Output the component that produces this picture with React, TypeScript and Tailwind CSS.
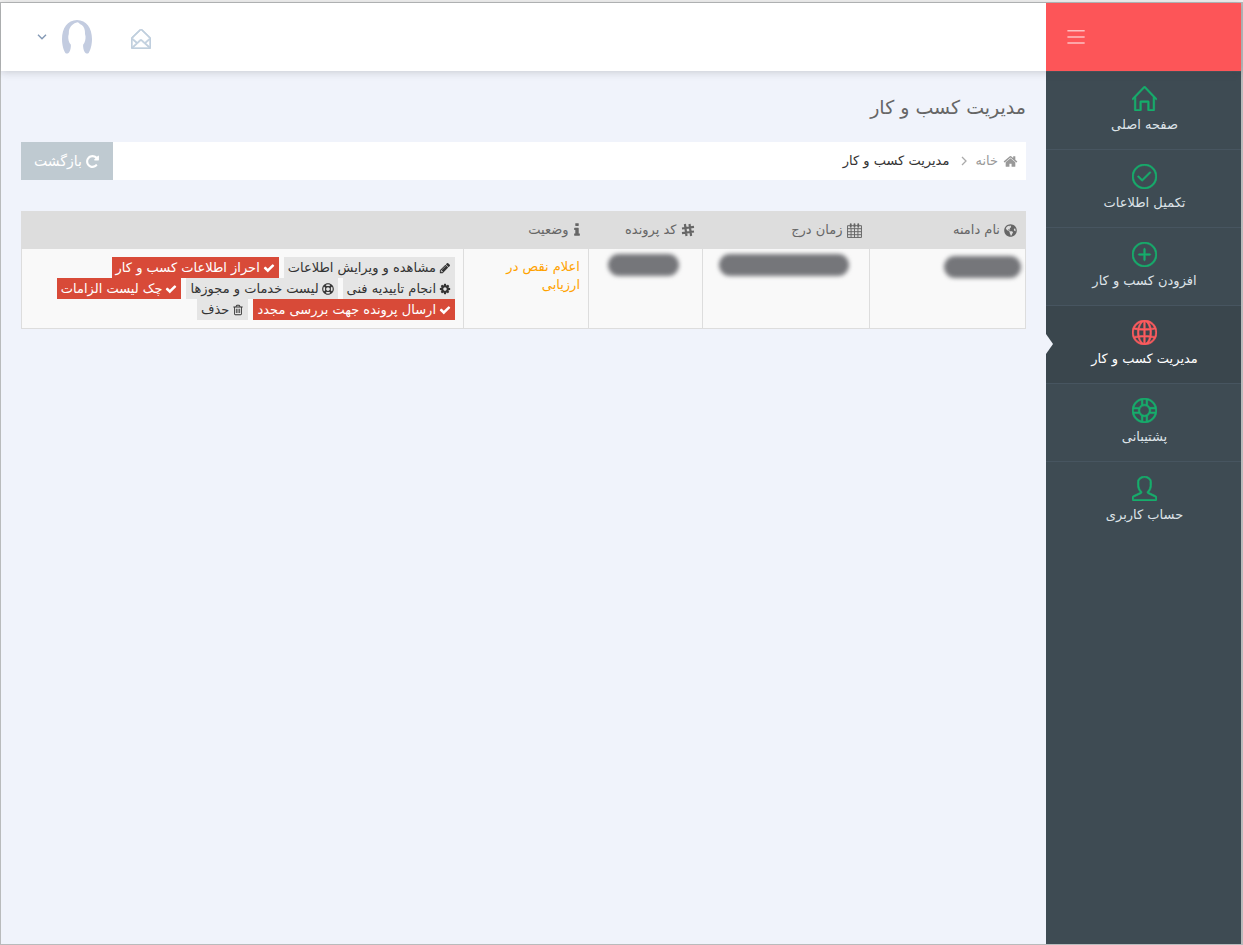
import React from "react";
import {
  SlCheck,
  SlEnvelopeOpen,
  SlGlobe,
  SlHome,
  SlMenu,
  SlPlus,
  SlSupport,
  SlUser,
} from "react-icons/sl";
import { FaGlobeAmericas, FaRegLifeRing } from "react-icons/fa";
import type { IconType } from "react-icons";
import clsx from "clsx";

const GLYPHS = {
  check:
    "M1671 566q0 40-28 68l-724 724-136 136q-28 28-68 28t-68-28l-136-136-362-362q-28-28-28-68t28-68l136-136q28-28 68-28t68 28l294 295 656-657q28-28 68-28t68 28l136 136q28 28 28 68z",
  home: "M1472 992v480q0 26-19 45t-45 19h-384v-384h-256v384h-384q-26 0-45-19t-19-45v-480q0-1 .5-3t.5-3l575-474 575 474q1 2 1 6zm223-69l-62 74q-8 9-21 11h-3q-13 0-21-7l-692-577-692 577q-12 8-24 7-13-2-21-11l-62-74q-8-10-7-23.5t11-21.5l719-599q32-26 76-26t76 26l244 204v-195q0-14 9-23t23-9h192q14 0 23 9t9 23v408l219 182q10 8 11 21.5t-7 23.5z",
  pencil:
    "M491 1536l91-91-235-235-91 91v107h128v128h107zm523-928q0-22-22-22-10 0-17 7l-542 542q-7 7-7 17 0 22 22 22 10 0 17-7l542-542q7-7 7-17zm-54-192l416 416-832 832h-416v-416zm683 96q0 53-37 90l-166 166-416-416 166-165q36-38 90-38 53 0 91 38l235 234q37 39 37 91z",
  cog: "M1152 896q0-106-75-181t-181-75-181 75-75 181 75 181 181 75 181-75 75-181zm512-109v222q0 12-8 23t-20 13l-185 28q-19 54-39 91 35 50 107 138 10 12 10 25t-9 23q-27 37-99 108t-94 71q-12 0-26-9l-138-108q-44 23-91 38-16 136-29 186-7 28-36 28h-222q-14 0-24.5-8.5t-11.5-21.5l-28-184q-49-16-90-37l-141 107q-10 9-25 9-14 0-25-11-126-114-165-168-7-10-7-23 0-12 8-23 15-21 51-66.5t54-70.5q-27-50-41-99l-183-27q-13-2-21-12.5t-8-23.5v-222q0-12 8-23t19-13l186-28q14-46 39-92-40-57-107-138-10-12-10-24 0-10 9-23 26-36 98.5-107.5t94.5-71.5q13 0 26 10l138 107q44-23 91-38 16-136 29-186 7-28 36-28h222q14 0 24.5 8.5t11.5 21.5l28 184q49 16 90 37l142-107q9-9 24-9 13 0 25 10 129 119 165 170 7 8 7 22 0 12-8 23-15 21-51 66.5t-54 70.5q26 50 41 98l183 28q13 2 21 12.5t8 23.5z",
  info: "M1216 1344v128q0 26-19 45t-45 19h-512q-26 0-45-19t-19-45v-128q0-26 19-45t45-19h64v-384h-64q-26 0-45-19t-19-45v-128q0-26 19-45t45-19h384q26 0 45 19t19 45v576h64q26 0 45 19t19 45zm-128-1152v192q0 26-19 45t-45 19h-256q-26 0-45-19t-19-45v-192q0-26 19-45t45-19h256q26 0 45 19t19 45z",
  repeat:
    "M1664 256v448q0 26-19 45t-45 19h-448q-42 0-59-40-17-39 14-69l138-138q-148-137-349-137-104 0-198.5 40.5t-163.5 109.5-109.5 163.5-40.5 198.5 40.5 198.5 109.5 163.5 163.5 109.5 198.5 40.5q119 0 225-52t179-147q7-10 23-12 15 0 25 9l137 138q9 8 9.5 20.5t-7.5 22.5q-109 132-264 204.5t-327 72.5q-156 0-298-61t-245-164-164-245-61-298 61-298 164-245 245-164 298-61q147 0 284.5 55.5t244.5 156.5l130-129q29-31 70-14 39 17 39 59z",
  trash:
    "M704 736v576q0 14-9 23t-23 9h-64q-14 0-23-9t-9-23v-576q0-14 9-23t23-9h64q14 0 23 9t9 23zm256 0v576q0 14-9 23t-23 9h-64q-14 0-23-9t-9-23v-576q0-14 9-23t23-9h64q14 0 23 9t9 23zm256 0v576q0 14-9 23t-23 9h-64q-14 0-23-9t-9-23v-576q0-14 9-23t23-9h64q14 0 23 9t9 23zm128 724v-948h-896v948q0 22 7 40.5t14.5 27 10.5 8.5h832q3 0 10.5-8.5t14.5-27 7-40.5zm-672-1076h448l-48-117q-7-9-17-11h-317q-10 2-17 11zm928 32v64q0 14-9 23t-23 9h-96v948q0 83-47 143.5t-113 60.5h-832q-66 0-113-58.5t-47-141.5v-952h-96q-14 0-23-9t-9-23v-64q0-14 9-23t23-9h309l70-167q15-37 54-63t79-26h320q40 0 79 26t54 63l70 167h309q14 0 23 9t9 23z",
};

type GlyphName = keyof typeof GLYPHS;

const Glyph: React.FC<{ name: GlyphName; className?: string }> = ({ name, className }) => (
  <svg viewBox="0 0 1792 1792" fill="currentColor" aria-hidden="true" className={clsx("shrink-0", className)}>
    <path d={GLYPHS[name]} />
  </svg>
);

const CalendarIcon = () => (
  <svg viewBox="0 0 14 14" fill="none" stroke="currentColor" aria-hidden="true" className="size-[15px] shrink-0">
    <path d="M.5 2.500h13v11H.5zM.5 5.300h13M.5 8.100h13M.5 10.900h13M3.800 5v8.500M7 5v8.500M10.200 5v8.500" strokeWidth="0.900" />
    <path d="M3.500 1v2.600M7 1v2.600M10.500 1v2.600" strokeWidth="1.700" strokeLinecap="round" />
  </svg>
);

const HashIcon = () => (
  <svg viewBox="0 0 14 14" fill="none" stroke="currentColor" strokeWidth="2.200" aria-hidden="true" className="size-[14px] shrink-0">
    <path d="M3.900 1l1.600 12M8.500 1l1.600 12M1 5.500l12-1.600M1 10.100l12-1.600" />
  </svg>
);

const AvatarIcon = () => (
  <svg viewBox="0 0 30 34" fill="#c3cce0" aria-hidden="true" className="h-[34px] w-[30px]">
    <path d="M15 0C5.500 0 0 8.500 0 19c0 6 1.500 11 3.200 13.700.8 1.300 3 1.200 4-.4 1.400-2.300 1.800-5.300 1.700-7.500C6.800 22.500 6 19 6.300 16c.5-1.200.6-3.200.6-5C7.500 6.500 11.500 3 15.500 2.200c1 .3 2 .9 2.400 1.900 2.800.9 4.500 3.700 5 6.900.1 2 .1 3.800.6 5 .3 3-.5 6.500-2.400 8.800-.1 2.200.3 5.200 1.700 7.500 1 1.600 3.200 1.700 4 .4C28.500 30 30 25 30 19 30 8.500 24.500 0 15 0z" />
  </svg>
);

const MENU: { label: string; icon: IconType; active?: boolean }[] = [
  { label: "صفحه اصلی", icon: SlHome },
  { label: "تکمیل اطلاعات", icon: SlCheck },
  { label: "افزودن کسب و کار", icon: SlPlus },
  { label: "مدیریت کسب و کار", icon: SlGlobe, active: true },
  { label: "پشتیبانی", icon: SlSupport },
  { label: "حساب کاربری", icon: SlUser },
];

const ACTIONS: { label: string; icon: React.ReactNode; danger?: boolean }[] = [
  { label: "مشاهده و ویرایش اطلاعات", icon: <Glyph name="pencil" className="size-3" /> },
  { label: "احراز اطلاعات کسب و کار", icon: <Glyph name="check" className="size-3" />, danger: true },
  { label: "انجام تاییدیه فنی", icon: <Glyph name="cog" className="size-3" /> },
  { label: "لیست خدمات و مجوزها", icon: <FaRegLifeRing className="size-3 shrink-0" /> },
  { label: "چک لیست الزامات", icon: <Glyph name="check" className="size-3" />, danger: true },
  { label: "ارسال پرونده جهت بررسی مجدد", icon: <Glyph name="check" className="size-3" />, danger: true },
  { label: "حذف", icon: <Glyph name="trash" className="size-3" /> },
];

const COLUMNS: { label: string; icon: React.ReactNode; width: string }[] = [
  { label: "نام دامنه", icon: <FaGlobeAmericas className="size-[13px] shrink-0" />, width: "w-[156px]" },
  { label: "زمان درج", icon: <CalendarIcon />, width: "w-[167px]" },
  { label: "کد پرونده", icon: <HashIcon />, width: "w-[114px]" },
  { label: "وضعیت", icon: <Glyph name="info" className="-mx-1 size-4" />, width: "w-[125px]" },
];

// Hidden value, drawn as a smudged bar
const Redacted: React.FC<{ className?: string }> = ({ className }) => (
  <div className={clsx("h-[22px] rounded-full bg-[#75767a] blur-[2px]", className)} />
);

const Sidebar = () => (
  <aside className="w-[195px] shrink-0 bg-[#3e4b53]">
    <nav>
      <ul>
        {MENU.map(({ label, icon: Icon, active }) => (
          <li key={label} className={clsx("relative border-t border-[#475560]", active && "bg-[#3a464d]")}>
            <a
              href="#"
              className={clsx(
                "flex h-[77px] flex-col items-center gap-1 pt-[14px] pl-0.5 text-[13px] leading-5",
                active ? "text-white" : "text-[#dde3e8]",
              )}
            >
              <Icon
                stroke="currentColor"
                strokeWidth={24}
                className={clsx("size-[25px]", active ? "text-[#fc5b5e]" : "text-[#16ae6c]")}
              />
              {label}
            </a>
            {active && (
              <span className="absolute top-7 left-0 border-y-10 border-l-7 border-y-transparent border-l-[#f0f3fb]" />
            )}
          </li>
        ))}
      </ul>
    </nav>
  </aside>
);

const App: React.FC = () => {
  return (
    <div
      dir="rtl"
      className="flex min-h-screen flex-col border-t-2 border-[#f1f1f1] bg-[#f0f3fb] font-['DejaVu_Sans',sans-serif] text-[13px] text-[#666]"
    >
      <div className="flex flex-1 flex-col border border-[#b9bbbc] border-r-2">
        {/* Header */}
        <header className="relative z-10 flex h-[68px] shrink-0 bg-white shadow-[0_1px_8px_rgba(50,50,50,0.22)]">
          <div className="flex w-[195px] shrink-0 items-center justify-end bg-[#fd5558] px-[21px]">
            <button type="button" aria-label="منو" className="text-[#fdc0c1]">
              <SlMenu className="size-[18px]" />
            </button>
          </div>
          <div className="flex flex-1 items-center justify-end gap-[39px] px-9">
            <button type="button" aria-label="پیام‌ها" className="pt-1 text-[#c0cfde]">
              <SlEnvelopeOpen stroke="currentColor" strokeWidth={40} className="size-5" />
            </button>
            <button type="button" aria-label="حساب کاربری" className="flex items-center gap-[15px]">
              <AvatarIcon />
              <svg viewBox="0 0 10 6" fill="none" stroke="#8499b5" strokeWidth="1.400" className="h-1.5 w-2.5">
                <path d="M1 .8l4 4 4-4" />
              </svg>
            </button>
          </div>
        </header>

        <div className="flex flex-1">
          <Sidebar />

          {/* Content */}
          <main className="min-w-0 flex-1 px-5 pt-5">
            <h1 className="text-[19px] leading-8">مدیریت کسب و کار</h1>

            <div className="mt-[19px] flex h-[38px] justify-between bg-white">
              <nav aria-label="breadcrumb" className="flex items-center gap-2 ps-2">
                <a href="#" className="flex items-center gap-[5px] text-[#999]">
                  <Glyph name="home" className="size-[15px] text-[#999]" />
                  خانه
                </a>
                <svg viewBox="0 0 6 10" fill="none" stroke="#aaa" strokeWidth="1.300" className="h-2.5 w-1.5">
                  <path d="M1 1l4 4-4 4" />
                </svg>
                <span className="ps-1 text-[#333]">مدیریت کسب و کار</span>
              </nav>
              <button type="button" className="flex items-center gap-[3px] bg-[#bfcad1] px-[13px] text-[14px] text-white">
                <Glyph name="repeat" className="size-[15px]" />
                بازگشت
              </button>
            </div>

            <table className="mt-[31px] w-full table-fixed border-collapse border border-[#ddd] bg-[#f9f9f9]">
              <thead>
                <tr className="bg-[#ddd]">
                  {COLUMNS.map((col) => (
                    <th key={col.label} scope="col" className={clsx("h-[37px] px-2 font-normal", col.width)}>
                      <span className="flex items-center gap-1">
                        {col.icon}
                        {col.label}
                      </span>
                    </th>
                  ))}
                  <td />
                </tr>
              </thead>
              <tbody>
                <tr className="align-top">
                  <td className="border border-[#ddd] ps-1 pt-[7px]">
                    <Redacted className="w-[77px]" />
                  </td>
                  <td className="border border-[#ddd] ps-5 pt-[5px]">
                    <Redacted className="w-[130px]" />
                  </td>
                  <td className="border border-[#ddd] ps-[23px] pt-[5px]">
                    <Redacted className="w-[71px]" />
                  </td>
                  <td className="border border-[#ddd] px-2 pt-[9px] leading-[18px] text-[#ffa200]">
                    اعلام نقص در ارزیابی
                  </td>
                  <td className="border border-[#ddd] p-2">
                    <div className="flex flex-wrap gap-x-[5px]">
                      {ACTIONS.map((action) => (
                        <button
                          key={action.label}
                          type="button"
                          className={clsx(
                            "flex h-[21px] items-center gap-[3px] px-1",
                            action.danger ? "bg-[#d84a38] text-white" : "bg-[#e5e5e5] text-[#333]",
                          )}
                        >
                          {action.icon}
                          {action.label}
                        </button>
                      ))}
                    </div>
                  </td>
                </tr>
              </tbody>
            </table>
          </main>
        </div>
      </div>
    </div>
  );
};

export default App;
